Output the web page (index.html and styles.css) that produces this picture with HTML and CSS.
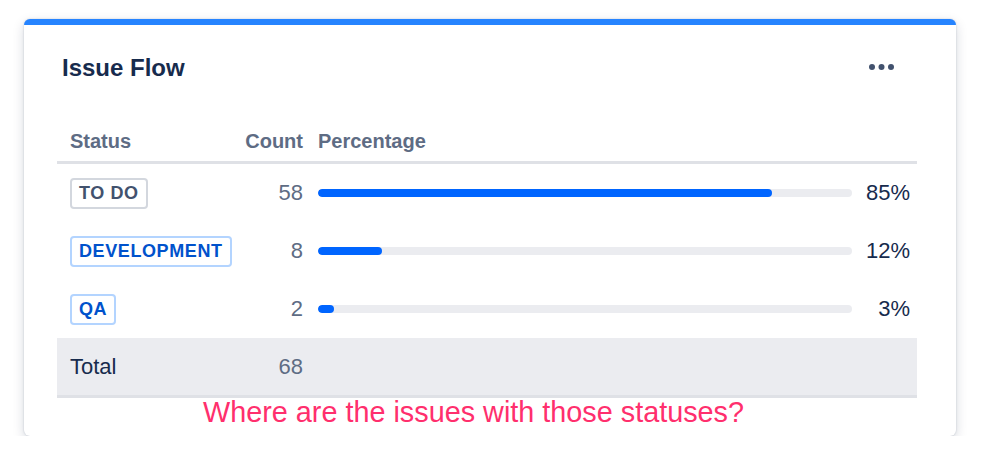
FILE: index.html
```html
<!DOCTYPE html>
<html>
<head>
<meta charset="utf-8">
<link rel="stylesheet" href="styles.css">
</head>
<body>
<div class="card">
  <div class="card-header">
    <h2 class="title">Issue Flow</h2>
    <svg class="more" width="25" height="8" viewBox="0 0 25 8" aria-label="More">
      <circle cx="3" cy="4" r="3" fill="#42526e"/>
      <circle cx="12.5" cy="4" r="3" fill="#42526e"/>
      <circle cx="22" cy="4" r="3" fill="#42526e"/>
    </svg>
  </div>
  <div class="table">
    <div class="row head">
      <div class="c1">Status</div>
      <div class="c2">Count</div>
      <div class="c3">Percentage</div>
      <div class="c4"></div>
    </div>
    <div class="row">
      <div class="c1"><span class="loz loz-grey">TO DO</span></div>
      <div class="c2 num">58</div>
      <div class="c3"><div class="track"><div class="fill" style="width:85%"></div></div></div>
      <div class="c4 pct">85%</div>
    </div>
    <div class="row">
      <div class="c1"><span class="loz loz-blue">DEVELOPMENT</span></div>
      <div class="c2 num">8</div>
      <div class="c3"><div class="track"><div class="fill" style="width:12%"></div></div></div>
      <div class="c4 pct">12%</div>
    </div>
    <div class="row">
      <div class="c1"><span class="loz loz-blue">QA</span></div>
      <div class="c2 num">2</div>
      <div class="c3"><div class="track"><div class="fill" style="width:3%"></div></div></div>
      <div class="c4 pct">3%</div>
    </div>
    <div class="row total">
      <div class="c1">Total</div>
      <div class="c2 num">68</div>
      <div class="c3"></div>
      <div class="c4"></div>
    </div>
  </div>
  <p class="note">Where are the issues with those statuses?</p>
</div>
</body>
</html>
```

FILE: styles.css
```css
* { box-sizing: border-box; }
html, body { margin: 0; padding: 0; background: #ffffff; }
body {
  font-family: "Liberation Sans", Arial, sans-serif;
  color: #172b4d;
  padding: 19px 0 0 24px;
}
.card {
  width: 932px;
  height: 417px;
  background: #ffffff;
  border-top: 6px solid #2684ff;
  border-radius: 6px;
  box-shadow: 0 4px 12px rgba(9, 30, 66, 0.17), 0 0 2px rgba(9, 30, 66, 0.2);
  padding: 0 39px 10px 33px;
}
.card-header {
  display: flex;
  align-items: center;
  justify-content: space-between;
  padding-top: 27px;
  height: 59px;
}
.title {
  margin: 0 0 0 5px;
  font-size: 24px;
  line-height: 32px;
  font-weight: 700;
  color: #172b4d;
}
.more { display: block; margin-right: 23px; margin-top: -2px; }
.table { margin-top: 37px; }
.row {
  display: grid;
  grid-template-columns: 188px 66px 549px 57px;
  align-items: center;
  height: 58px;
  font-size: 22px;
}
.row.head {
  height: 43px;
  border-bottom: 3px solid #dfe1e6;
  font-size: 20px;
  font-weight: 700;
  color: #5e6c84;
}
.c1 { padding-left: 13px; }
.c2 { text-align: right; padding-right: 8px; }
.c3 { padding-left: 7px; padding-right: 8px; }
.c4 { text-align: right; padding-right: 7px; }
.num { color: #5e6c84; }
.pct { color: #172b4d; }
.loz {
  display: inline-block;
  height: 31px;
  line-height: 27px;
  padding: 0 7px;
  border: 2px solid;
  border-radius: 4px;
  font-size: 18px;
  font-weight: 700;
  letter-spacing: 0.6px;
}
.loz-grey { color: #42526e; border-color: #d3d7de; }
.loz-blue { color: #0052cc; border-color: #b3d4ff; }
.track {
  height: 8px;
  border-radius: 4px;
  background: #ebecf0;
  overflow: hidden;
}
.fill {
  height: 100%;
  border-radius: 4px;
  background: #0065ff;
}
.row.total {
  height: 60px;
  background: #ebecf0;
  border-bottom: 3px solid #dfe1e6;
}
.note {
  margin: 0;
  padding-left: 146px;
  font-size: 28.8px;
  line-height: 28px;
  color: #ff2f6d;
}
```
